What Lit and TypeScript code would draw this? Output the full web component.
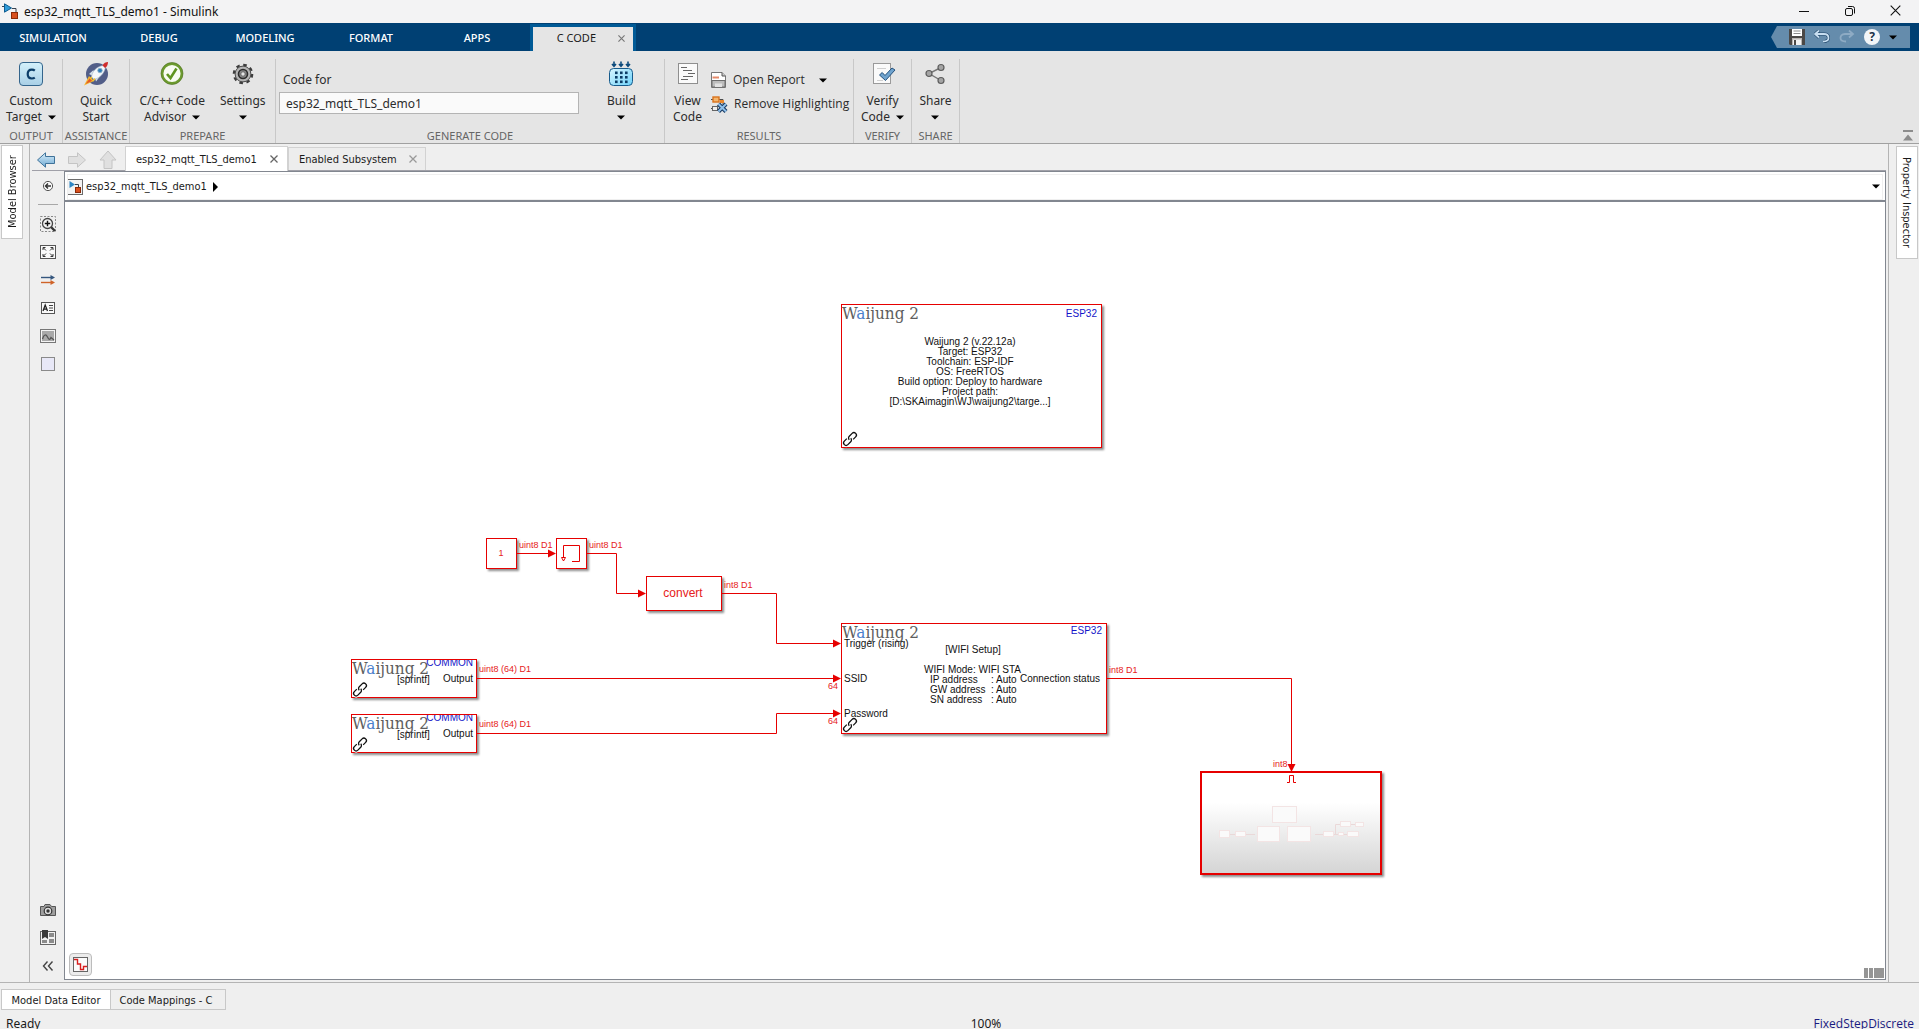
import { LitElement, html, svg, css } from "lit";
import { customElement } from "lit/decorators.js";

const UI_TABS = ["SIMULATION", "DEBUG", "MODELING", "FORMAT", "APPS"];

const caret = html`<svg class="caret" width="8" height="5" viewBox="0 0 8 5" aria-hidden="true"><path d="M0 0.5H8L4 4.5Z" fill="#000" /></svg>`;

const simulinkMark = svg`
  <path d="M0 3.5H4M10 5.5H14V9" stroke="#39424e" stroke-width="1" fill="none" />
  <path d="M2.5 0.8L9.5 5L2.5 9.2Z" fill="#2f9bd8" stroke="#0d5c91" />
  <rect x="9.5" y="9.5" width="6" height="6" fill="#d9501e" stroke="#8a2a08" />`;

const icons = {
  logo: html`<svg width="17" height="17" viewBox="0 0 17 17">${simulinkMark}</svg>`,
  target: html`<svg width="26" height="26" viewBox="0 0 26 26">
    <defs><linearGradient id="tg" x1="0" y1="0" x2="0" y2="1"><stop offset="0" stop-color="#d4f1fb" /><stop offset="1" stop-color="#a9cfe6" /></linearGradient></defs>
    <rect x="1.5" y="1.5" width="23" height="23" rx="3.5" fill="url(#tg)" stroke="#34658c" />
    <path d="M16.8 9.6C16 8.9 15 8.6 13.9 8.6C11.3 8.6 9.7 10.4 9.7 13.1C9.7 15.8 11.3 17.5 13.8 17.5C15 17.5 16 17.2 16.8 16.6" fill="none" stroke="#0b3d68" stroke-width="2.2" />
  </svg>`,
  rocket: html`<svg width="26" height="26" viewBox="0 0 26 26">
    <circle cx="14" cy="13" r="11" fill="#525e88" />
    <path d="M6 15L1 24.5L11 20Z" fill="#f5b82e" /><path d="M7 17L2.5 23L9 20Z" fill="#e2582a" />
    <path d="M6 13L10 9.5L13 10L16 13L16.5 16L13 20.5L12 16.5L10 15Z" fill="#d5e2ec" />
    <path d="M8.5 16C9 11 13 5.5 20.5 4.5L22.5 6C21.5 12 17 17 11 18.5Z" fill="#f4f8fb" stroke="#a5b5c6" stroke-width="0.6" />
    <path d="M19.5 4.5C20.5 2 23 1 25 1C25 3.5 24 6 22 7Z" fill="#cf2c2c" />
    <circle cx="17" cy="9.5" r="2.3" fill="#2f7fb9" stroke="#93b3c9" stroke-width="0.8" />
    <path d="M9 16L7 18M12 17.5L10 20" stroke="#f1c232" stroke-width="1.4" />
  </svg>`,
  advisor: html`<svg width="26" height="26" viewBox="0 0 26 26">
    <circle cx="13" cy="12.5" r="9.8" fill="#f8fcf2" stroke="#6c9a2e" stroke-width="2.4" />
    <circle cx="13" cy="12.5" r="11" fill="none" stroke="#4a6d1c" stroke-width="0.6" />
    <path d="M8 13L11.5 17L17.5 7.5" fill="none" stroke="#5f9420" stroke-width="2.6" />
  </svg>`,
  gear: html`<svg width="26" height="26" viewBox="0 0 26 26">
    <circle cx="13" cy="13" r="9.2" fill="none" stroke="#3c3c3c" stroke-width="2.2" stroke-dasharray="3.6 3.62" />
    <circle cx="13" cy="13" r="7.9" fill="#b4b4b4" stroke="#4a4a4a" stroke-width="1" />
    <circle cx="13" cy="13" r="4.5" fill="#8a8a8a" stroke="#2c2c2c" stroke-width="1.6" />
    <circle cx="13" cy="13" r="2.2" fill="#e6e6e6" stroke="#555" stroke-width="0.8" />
  </svg>`,
  build: html`<svg width="26" height="26" viewBox="0 0 26 26">
    <defs><linearGradient id="bg" x1="0" y1="0" x2="1" y2="1"><stop offset="0" stop-color="#d8f6ff" /><stop offset="1" stop-color="#6fd2fa" /></linearGradient></defs>
    <rect x="1.5" y="7.5" width="23" height="17" rx="4" fill="url(#bg)" stroke="#175b8c" />
    ${[6, 13, 20].map((x) => svg`<path d="M${x} 0.5V5M${x - 2} 3L${x} 5.2L${x + 2} 3" fill="none" stroke="#0b4a7c" stroke-width="1.6" />`)}
    ${[7, 12, 17].map((x) => [10.5, 15, 19.5].map((y) => svg`<rect x="${x}" y="${y}" width="2.6" height="2.6" fill="#0b3c66" />`))}
  </svg>`,
  viewCode: html`<svg width="26" height="26" viewBox="0 0 26 26">
    <rect x="3.5" y="2.5" width="19" height="20" fill="#fafafa" stroke="#8f8f8f" />
    <path d="M6 6.5H12M8 9.5H17M13 12.5H20M8 15.5H18M6 18.5H13" stroke="#666" />
  </svg>`,
  report: html`<svg width="16" height="16" viewBox="0 0 16 16">
    <path d="M0.5 0.5H11L14.5 4V15.5H0.5Z" fill="#fff" stroke="#777" />
    <path d="M11 0.5V4H14.5" fill="#ccc" stroke="#555" />
    <path d="M1.5 5.5H8" stroke="#e58a6a" stroke-width="2" /><path d="M1 8.5H14V15H1Z" fill="#bdbdbd" stroke="#6c6c6c" /><path d="M4 11.5H11V15H4Z" fill="#e2e2e2" />
  </svg>`,
  removeHl: html`<svg width="17" height="17" viewBox="0 0 17 17">
    <path d="M0 3.5H2M8 3.5H12V8M0 12.5H6" fill="none" stroke="#4d4d4d" />
    <rect x="2" y="1" width="6" height="5" fill="#f3b56c" stroke="#d9721c" stroke-width="1.4" /><rect x="9" y="4" width="4" height="3" fill="#e8862a" />
    <rect x="1.5" y="10.5" width="5" height="4" fill="#eee" stroke="#666" />
    <path d="M7.5 8L15 15.5M15 8L7.5 15.5" stroke="#173a63" stroke-width="4.2" /><path d="M7.5 8L15 15.5M15 8L7.5 15.5" stroke="#8fc0ea" stroke-width="2" />
  </svg>`,
  verify: html`<svg width="26" height="26" viewBox="0 0 26 26">
    <rect x="3.5" y="2.5" width="17" height="20" fill="#fafafa" stroke="#9a9a9a" />
    <path d="M7 7.5H16M7 19.5H13" stroke="#d0d0d0" />
    <path d="M9.5 14L12.2 11.5L15 14.5L22 7L25 9L15.5 19.5Z" fill="#6fa3ce" stroke="#24517d" />
  </svg>`,
  share: html`<svg width="26" height="26" viewBox="0 0 26 26">
    <path d="M19 6.5L7 12.5L19 19.5" fill="none" stroke="#777" stroke-width="1.4" />
    ${[[19, 6.5], [7, 12.5], [19, 19.5]].map(([x, y]) => svg`<circle cx="${x}" cy="${y}" r="3" fill="#a4a4a4" stroke="#5e5e5e" stroke-width="1.2" />`)}
  </svg>`,
  save: html`<svg width="16" height="16" viewBox="0 0 16 16">
    <path d="M0 0H16V16H1L0 15Z" fill="#4b4846" /><rect x="3" y="0" width="10" height="7" fill="#fff" />
    <path d="M4.5 2H11.5M4.5 4.5H11.5" stroke="#8c8c8c" /><rect x="3" y="9" width="10" height="7" fill="#b9b5b2" /><rect x="4" y="10.5" width="8" height="5.5" fill="#f2f2f2" /><rect x="5" y="11" width="2" height="5" fill="#4b4846" />
  </svg>`,
  undo: html`<svg width="16" height="14" viewBox="0 0 16 14">
    <path d="M5 0.5L1 4L5 7.5M1.5 4H10C13.5 4 14.5 6 14.5 8C14.5 10.5 12.5 11.5 9 11.5" fill="none" stroke="#1e4468" stroke-width="3" /><path d="M5 0.5L1 4L5 7.5M1.5 4H10C13.5 4 14.5 6 14.5 8C14.5 10.5 12.5 11.5 9 11.5" fill="none" stroke="#c7def1" stroke-width="1.8" />
  </svg>`,
  redo: html`<svg width="16" height="14" viewBox="0 0 16 14">
    <path d="M10 0.5L14 4L10 7.5M13.5 4H6C2.5 4 1.5 6 1.5 8C1.5 10.5 3.5 11.5 7 11.5" fill="none" stroke="#8eabc4" stroke-width="1.8" />
  </svg>`,
  back: html`<svg width="18" height="16" viewBox="0 0 18 16">
    <defs><linearGradient id="bk" x1="0" y1="0" x2="0" y2="1"><stop offset="0" stop-color="#d9eefa" /><stop offset="1" stop-color="#6ea9d3" /></linearGradient></defs>
    <path d="M0.5 8L8.5 0.8V4.5H17.5V11.5H8.5V15.2Z" fill="url(#bk)" stroke="#3f7299" />
  </svg>`,
  forward: html`<svg width="18" height="16" viewBox="0 0 18 16"><path d="M17.5 8L9.5 0.8V4.5H0.5V11.5H9.5V15.2Z" fill="#e0e0e0" stroke="#c4c4c4" /></svg>`,
  up: html`<svg width="18" height="20" viewBox="0 0 18 20"><path d="M9 1L17 10H13V18.5H5V10H1Z" fill="#e0e0e0" stroke="#c4c4c4" /></svg>`,
  modelFile: html`<svg width="16" height="16" viewBox="0 0 16 16">
    <rect x="0.5" y="0.5" width="15" height="15" fill="#f3f3f3" stroke="#6b6b6b" />
    <path d="M8 5.5H11.5V8" fill="none" stroke="#39424e" /><path d="M2.5 2L8 5.5L2.5 9Z" fill="#2f86c4" /><rect x="8.5" y="8.5" width="5" height="5" fill="#d9501e" stroke="#8a2a08" />
  </svg>`,
};

const tool = {
  hide: svg`<circle cx="8" cy="8" r="4.6" fill="#fafafa" stroke="#555" /><path d="M11 8H6M8 5.5L5.5 8L8 10.5" fill="none" stroke="#333" stroke-width="1.4" />`,
  zoom: svg`<rect x="0.5" y="0.5" width="15" height="15" fill="none" stroke="#888" stroke-dasharray="2 1.5" /><path d="M11 11L15 15" stroke="#333" stroke-width="2.4" /><circle cx="7.5" cy="7.5" r="5" fill="#f4f4f4" stroke="#444" stroke-width="1.3" /><path d="M4.8 7.5H10.2M7.5 4.8V10.2" stroke="#111" stroke-width="1.4" />`,
  fit: svg`<rect x="0.5" y="1.5" width="15" height="13" fill="#fafafa" stroke="#555" /><path d="M3 6V3.5H5.5M3.5 4L6 6.5M13 6V3.5H10.5M12.5 4L10 6.5M3 10V12.5H5.5M3.5 12L6 9.5M13 10V12.5H10.5M12.5 12L10 9.5" fill="none" stroke="#333" />`,
  signals: svg`<path d="M1 5.5H12" stroke="#35567e" stroke-width="1.4" /><path d="M10.5 3L15 5.5L10.5 8Z" fill="#35567e" /><path d="M1 10.5H12" stroke="#cf6328" stroke-width="1.4" /><path d="M10.5 8L15 10.5L10.5 13Z" fill="#cf6328" />`,
  note: svg`<rect x="1.5" y="2.5" width="13" height="11" fill="#fafafa" stroke="#555" /><path d="M3 11L5.2 5L7.5 11M3.8 9.2H6.8" fill="none" stroke="#222" stroke-width="1.3" /><path d="M9 5.5H13M9 8H13M9 10.5H13" stroke="#444" />`,
  image: svg`<rect x="0.5" y="1.5" width="15" height="13" fill="#f4f4f4" stroke="#777" /><rect x="2" y="3" width="12" height="10" fill="#a9a9a9" /><path d="M2.5 11C4 6 6 6 7.5 9S10 12 11 9.5L14 12" fill="none" stroke="#555" stroke-width="1.3" />`,
  area: svg`<rect x="1.5" y="1.5" width="13" height="13" fill="#e8e8f7" stroke="#8a8a8a" />`,
  camera: svg`<path d="M0.5 4.5H4L5 2.5H10L11.5 4.5H15.5V13.5H0.5Z" fill="#9f9f9f" stroke="#555" /><circle cx="8" cy="9" r="3.8" fill="#ddd" stroke="#333" stroke-width="1.2" /><circle cx="8" cy="9" r="1.7" fill="#333" />`,
  browser: svg`<rect x="0.5" y="1.5" width="15" height="13" fill="#f2f2f2" stroke="#666" /><path d="M2 0H8V9L5 7L2 9Z" fill="#3a3a3a" /><rect x="9" y="3" width="5" height="4" fill="#8c8c8c" /><rect x="9" y="9" width="5" height="4" fill="#8c8c8c" /><rect x="2" y="10" width="5" height="3" fill="#8c8c8c" />`,
  collapse: svg`<path d="M7.500 3.500L3.500 8L7.500 12.500M12.500 3.500L8.500 8L12.500 12.500" fill="none" stroke="#444" stroke-width="1.4" />`,
};

const TOOLS_TOP: [string, unknown][] = [
  ["Zoom", tool.zoom],
  ["Fit to View", tool.fit],
  ["Sample Time", tool.signals],
  ["Annotation", tool.note],
  ["Image", tool.image],
  ["Area", tool.area],
];
const TOOLS_BOTTOM: [string, unknown][] = [
  ["Screenshot", tool.camera],
  ["Library Browser", tool.browser],
  ["Hide toolbar", tool.collapse],
];

/* Diagram drawing helpers; coordinates are canvas units. */
const arrowRight = (x: number, y: number) => svg`<path class="tip" d="M${x} ${y}L${x - 8} ${y - 4}V${y + 4}Z" />`;
const link = (x: number, y: number) => svg`
  <g transform="translate(${x} ${y}) rotate(-45)" fill="none">
    <rect x="-8" y="-2.5" width="9" height="5" rx="2.5" stroke="#fff" stroke-width="3" />
    <rect x="-1" y="-2.5" width="9" height="5" rx="2.5" stroke="#fff" stroke-width="3" />
    <path d="M-2 -2.500H-5.500A2.500 2.500 0 0 0 -5.500 2.500H-1.500A2.500 2.500 0 0 0 1 0" stroke="#111" stroke-width="1.3" />
    <path d="M2 2.500H5.500A2.500 2.500 0 0 0 5.500 -2.500H1.500A2.500 2.500 0 0 0 -1 0" stroke="#111" stroke-width="1.3" />
  </g>`;
const brand = (x: number, y: number) => svg`<text class="brand" x="${x}" y="${y}">W<tspan class="accent">a</tspan>ijung 2</text>`;
const box = (x: number, y: number, w: number, h: number) => svg`<rect class="box" x="${x}" y="${y}" width="${w}" height="${h}" />`;

const sprintfBlock = (y: number) => svg`
  ${box(286.5, y, 125, 38)}
  <svg x="287" y="${y + 0.5}" width="124" height="37">
    <text class="blue end" x="121" y="6">COMMON</text>
    <text class="brand" x="0" y="14">W<tspan class="accent">a</tspan>ijung 2</text>
    <text class="t" x="45" y="23">[sprintf]</text>
    <text class="t end" x="121" y="22">Output</text>
  </svg>
  ${link(295, y + 30)}
  <text class="sig" x="414" y="${y + 12.5}">uint8 (64) D1</text>`;

const INFO = ["Waijung 2 (v.22.12a)", "Target: ESP32", "Toolchain: ESP-IDF", "OS: FreeRTOS", "Build option: Deploy to hardware", "Project path:", "[D:\\SKAimagin\\WJ\\waijung2\\targe...]"];

@customElement("model-canvas")
export class ModelCanvas extends LitElement {
  static styles = css`
    :host { display: block; position: relative; min-height: 0; overflow: hidden; background: #fff; }
    .diagram { display: block; width: 100%; height: 100%; font-family: "Liberation Sans", Arial, sans-serif; }
    .box { fill: #fff; stroke: #e60000; stroke-width: 1; filter: drop-shadow(2px 2px 1px rgba(0, 0, 0, 0.45)); }
    .sub { stroke-width: 2; fill: url(#fade); }
    .wire { fill: none; stroke: #e60000; stroke-width: 1; }
    .tip { fill: #e60000; }
    .t { font-size: 10px; fill: #111; }
    .blue { font-size: 10px; fill: #1414c8; }
    .sig { font-size: 9px; fill: #e62020; }
    .big { font-size: 12px; fill: #e62020; }
    .mid { text-anchor: middle; }
    .end { text-anchor: end; }
    .brand { font-family: "DejaVu Serif Condensed", "DejaVu Serif", serif; font-size: 17px; fill: #5e5e5e; }
    .accent { fill: #4a80cc; }
    .mini { fill: #fafafa; stroke: #f3e4e4; }
    .mini-wire { fill: none; stroke: #ead8d8; }
    .badge { position: absolute; left: 4px; bottom: 3px; width: 23px; height: 23px; padding: 0; display: grid; place-items: center; background: #ececec; border: 1px solid #bcbcbc; border-radius: 4px; }
    .bars { position: absolute; right: 1px; bottom: 1px; display: flex; gap: 1px; }
    .bar { width: 4px; height: 10px; background: #959595; }
    .wide { width: 10px; }
  `;

  render() {
    return html`
      <svg class="diagram" role="img" aria-label="Block diagram">
        <defs><linearGradient id="fade" x1="0" y1="0" x2="0" y2="1"><stop offset="0.3" stop-color="#fff" /><stop offset="1" stop-color="#d4d4d4" /></linearGradient></defs>

        ${box(776.5, 102.5, 260, 143)}
        ${brand(777, 117)}
        <text class="blue end" x="1032" y="115">ESP32</text>
        ${INFO.map((line, i) => svg`<text class="t mid" x="905" y="${143 + i * 10}">${line}</text>`)}
        ${link(785, 237)}

        ${box(421.5, 336.5, 30, 30)}
        <text class="sig mid" x="436" y="354">1</text>
        <path class="wire" d="M452 351.5H484" />${arrowRight(491, 351.5)}
        <text class="sig" x="454" y="346">uint8 D1</text>
        ${box(491.5, 336.5, 30, 30)}
        <path class="wire" d="M507 359.5H514.5V343.5H498.5V356M496.5 355.5H500.5L498.5 359Z" />
        <text class="sig" x="524" y="346">uint8 D1</text>
        <path class="wire" d="M522 351.5H551.5V391.5H574" />${arrowRight(581, 391.5)}
        ${box(581.5, 374.5, 75, 34)}
        <text class="big mid" x="618" y="395">convert</text>
        <text class="sig" x="659" y="386">int8 D1</text>
        <path class="wire" d="M657 391.5H711.5V441.5H768" />${arrowRight(776, 441.5)}

        ${sprintfBlock(457.5)}
        ${sprintfBlock(512.5)}
        <path class="wire" d="M412 476.5H768" />${arrowRight(776, 476.5)}
        <path class="wire" d="M412 531.5H711.5V511.5H768" />${arrowRight(776, 511.5)}
        <text class="sig" x="763" y="487">64</text>
        <text class="sig" x="763" y="522">64</text>

        ${box(776.5, 421.5, 265, 110)}
        ${brand(777, 436)}
        <text class="blue end" x="1037" y="432">ESP32</text>
        <text class="t" x="779" y="445">Trigger (rising)</text>
        <text class="t" x="779" y="480">SSID</text>
        <text class="t" x="779" y="515">Password</text>
        <text class="t mid" x="908" y="451">[WIFI Setup]</text>
        <text class="t" x="859" y="471">WIFI Mode: WIFI STA</text>
        ${["IP", "GW", "SN"].map((n, i) => svg`
          <text class="t" x="865" y="${481 + i * 10}">${n} address</text>
          <text class="t" x="926" y="${481 + i * 10}">: Auto</text>`)}
        <text class="t end" x="1035" y="480">Connection status</text>
        ${link(785, 523)}

        <text class="sig" x="1044" y="471">int8 D1</text>
        <path class="wire" d="M1042 476.5H1226.5V563" />
        <text class="sig" x="1208" y="565">int8</text>
        <rect class="box sub" x="1136" y="570" width="180" height="102" />
        <path class="tip" d="M1226.5 570L1222.5 562H1230.5Z" />
        <path class="wire" d="M1222 580.5H1224.5V573.5H1228.5V580.5H1231" />
        <path class="mini-wire" d="M1154 632.5H1190M1250 632.5H1290M1270.5 632V622.5H1295" />
        <rect class="mini" x="1207.5" y="604.5" width="24" height="16" />
        <rect class="mini" x="1192.5" y="624.5" width="22" height="15" />
        <rect class="mini" x="1222.5" y="624.5" width="23" height="15" />
        <rect class="mini" x="1154.5" y="628.5" width="10" height="7" />
        <rect class="mini" x="1170.5" y="629.5" width="10" height="5" />
        <rect class="mini" x="1258.5" y="629.5" width="10" height="5" />
        <rect class="mini" x="1273.5" y="630.5" width="5" height="3" />
        <rect class="mini" x="1282.5" y="629.5" width="11" height="5" />
        <rect class="mini" x="1275.5" y="619.5" width="10" height="5" />
        <rect class="mini" x="1290.5" y="620.5" width="8" height="4" />
      </svg>
      <button class="badge" aria-label="Code perspective">
        <svg width="15" height="15" viewBox="0 0 15 15"><rect x="0.5" y="0.5" width="14" height="14" fill="#fbfbfb" stroke="#666" /><path d="M1 2.5H4.5V7H7.5V12.5H10.5V9.5H14" fill="none" stroke="#d81e1e" stroke-width="1.4" /></svg>
      </button>
      <div class="bars"><div class="bar"></div><div class="bar"></div><div class="bar wide"></div></div>
    `;
  }
}

@customElement("app-root")
export class AppRoot extends LitElement {
  static styles = css`
    :host { display: block; font-family: "Noto Sans", "Open Sans", sans-serif; font-size: 12px; line-height: 16px; color: #1a1a1a; }
    * { box-sizing: border-box; }
    svg { display: block; flex: none; }
    button { font: inherit; color: inherit; background: none; border: 0; padding: 0; margin: 0; }
    .app { display: flex; flex-direction: column; min-height: 100vh; background: #efefef; }

    .titlebar { display: flex; align-items: center; height: 23px; padding: 0 18px 0 2px; background: #f3f3f4; color: #111; }
    .title { flex: 1; margin: 0 5px; font-size: 12px; font-weight: 400; }
    .window { display: flex; gap: 34px; align-items: center; padding-bottom: 2px; }

    .tabs { display: flex; height: 28px; background: #004073; }
    .tab { width: 106px; padding-top: 2px; color: #fff; font-size: 11px; font-weight: 500; }
    .tab-current { display: flex; width: 106px; margin-top: 1px; padding: 3px 3px 0; background: #005a96; }
    .tab-face { display: flex; flex: 1; align-items: center; justify-content: flex-end; gap: 22px; padding: 0 8px 2px 0; background: #e5e5e5; font-size: 11px; }
    .quick { display: flex; align-items: center; gap: 9px; height: 22px; margin: 3px 9px 0 auto; padding: 0 13px 0 18px; background: #658cac; clip-path: polygon(6px 0, 100% 0, 100% 100%, 6px 100%, 0 50%); }
    .help { display: grid; place-items: center; width: 16px; height: 16px; border-radius: 50%; background: #f2f5f8; color: #1c3349; font-weight: 700; font-size: 12px; }

    .ribbon { display: flex; height: 93px; padding-top: 8px; background: #e5e5e5; border-bottom: 1px solid #a0a0a0; color: #2c2c2c; }
    .group { display: flex; flex-direction: column; border-right: 1px solid #c8c8c8; }
    .group-body { display: flex; flex: 1; justify-content: center; padding-top: 2px; }
    .group-name { font-size: 11px; text-align: center; color: #666; line-height: 14px; white-space: nowrap; }
    .w-output { width: 63px; } .w-assist { width: 67px; } .w-prepare { width: 146px; } .w-generate { width: 389px; }
    .w-results { width: 189px; } .w-verify { width: 58px; } .w-share { width: 48px; }
    .cmd { display: flex; flex-direction: column; align-items: center; gap: 6px; white-space: nowrap; }
    .cmd-label { display: flex; flex-direction: column; align-items: center; }
    .cmd-line { display: flex; align-items: center; gap: 6px; height: 16px; }
    .prepare { gap: 15px; }
    .generate { justify-content: flex-start; padding-left: 3px; }
    .field { display: flex; flex-direction: column; gap: 4px; width: 300px; margin: 11px 28px 0 0; }
    .field label { padding-left: 4px; }
    .field input { height: 22px; width: 100%; padding: 0 6px; font: inherit; color: inherit; background: #fafafa; border: 1px solid #b4b4b4; border-radius: 0; }
    .results { justify-content: flex-start; gap: 9px; padding-left: 8px; }
    .rows { display: flex; flex-direction: column; gap: 8px; padding-top: 11px; font-family: "Open Sans", sans-serif; }
    .row { display: flex; align-items: center; gap: 6px; height: 16px; white-space: nowrap; }
    .row .caret { margin-left: 8px; }
    .collapse { margin: auto 5px 1px auto; }

    .work { display: flex; flex: 1; min-height: 0; border-bottom: 1px solid #b4b4b4; font-family: "DejaVu Sans Condensed", "DejaVu Sans", sans-serif; font-size: 11px; }
    .side-left { width: 30px; padding: 1px 0 0 1px; border-right: 1px solid #b4b4b4; }
    .side-right { width: 31px; padding: 2px 0 0 7px; border-left: 1px solid #b4b4b4; }
    .side-tab { display: flex; align-items: center; justify-content: center; width: 22px; height: 94px; writing-mode: vertical-rl; background: #fff; border: 1px solid #c8c8c8; }
    .side-left .side-tab { padding-right: 2px; }
    .side-right .side-tab { padding-right: 2px; }
    .flip { transform: rotate(180deg); }
    .tall { height: 113px; }
    .editor { display: flex; flex: 1; flex-direction: column; min-width: 0; padding: 0 2px 2px 2px; }
    .docs { display: flex; align-items: flex-end; height: 27px; border-bottom: 1px solid #a0a0a8; }
    .nav { display: flex; align-self: center; align-items: center; gap: 13px; margin: 5px 8px 0 5px; }
    .doc { display: flex; align-items: center; justify-content: space-between; height: 23px; width: 138px; padding: 2px 8px 0 10px; border: 1px solid #d2d2d2; border-bottom: 0; background: #ededed; }
    .doc-current { height: 25px; width: 163px; padding: 2px 9px 0 10px; background: #fff; margin-bottom: -1px; }
    .x { padding-bottom: 2px; }
    .body { display: flex; flex: 1; min-height: 0; }
    .tools { display: flex; flex-direction: column; width: 32px; padding: 1px 0 0; }
    .tool { display: grid; place-items: center; height: 28px; }
    .rule { height: 1px; margin: 4px 6px 5px; background: #a8a8a8; }
    .push { margin-top: auto; }
    .pane { display: flex; flex: 1; flex-direction: column; min-width: 0; border: 1px solid #828790; }
    .path { display: flex; align-items: center; gap: 3px; height: 30px; padding: 1px 5px 0 2px; background: #fff; border-bottom: 2px solid #828790; outline: 1px solid #efefef; outline-offset: -3px; }
    .path .caret { margin-left: auto; }
    .arrow { margin-left: 3px; }
    model-canvas { flex: 1; }

    .dock { display: flex; padding: 6px 0 0 1px; font-family: "DejaVu Sans Condensed", "DejaVu Sans", sans-serif; font-size: 11px; }
    .dock-tab { height: 21px; width: 116px; padding: 2px 4px 0 0; border: 1px solid #c8c8c8; }
    .dock-current { width: 109px; padding-right: 0; background: #fff; border-right: 0; }
    .status { display: grid; grid-template-columns: 1fr auto 1fr; align-items: center; height: 19px; padding: 6px 5px 0 6px; }
    .zoomed { padding-left: 52px; }
    .solver { text-align: right; color: #1a1a80; text-decoration: none; font-family: "Open Sans", sans-serif; }
  `;

  private closeMark(color: string, size = 8, weight = 1.3) {
    return html`<svg width="${size}" height="${size}" viewBox="0 0 8 8" aria-hidden="true"><path d="M0.5 0.5L7.5 7.5M7.5 0.5L0.5 7.5" stroke="${color}" stroke-width="${weight}" /></svg>`;
  }

  private command(icon: unknown, first: string, second = "", drop = false) {
    return html`<button class="cmd">${icon}
      <span class="cmd-label"><span class="cmd-line">${first}</span><span class="cmd-line">${second}${drop ? caret : ""}</span></span>
    </button>`;
  }

  private toolButton([name, art]: [string, unknown]) {
    return html`<button class="tool" aria-label="${name}"><svg width="16" height="16" viewBox="0 0 16 16">${art}</svg></button>`;
  }

  render() {
    return html`
      <div class="app">
        <header class="titlebar">
          ${icons.logo}
          <h1 class="title">esp32_mqtt_TLS_demo1 - Simulink</h1>
          <div class="window">
            <button aria-label="Minimize"><svg width="12" height="12" viewBox="0 0 12 12"><path d="M1 6.5H11" stroke="#111" /></svg></button>
            <button aria-label="Restore"><svg width="12" height="12" viewBox="0 0 12 12"><rect x="1.5" y="3.5" width="7" height="7" rx="1.5" fill="none" stroke="#111" /><path d="M4 1.5H8.5Q10.5 1.5 10.5 3.5V8.5" fill="none" stroke="#111" /></svg></button>
            <button aria-label="Close">${this.closeMark("#111", 11, 0.8)}</button>
          </div>
        </header>

        <nav class="tabs">
          ${UI_TABS.map((t) => html`<button class="tab">${t}</button>`)}
          <div class="tab-current"><div class="tab-face"><button>C CODE</button><button aria-label="Close tab">${this.closeMark("#777", 7)}</button></div></div>
          <div class="quick">
            <button aria-label="Save">${icons.save}</button>
            <button aria-label="Undo">${icons.undo}</button>
            <button aria-label="Redo">${icons.redo}</button>
            <button class="help">?</button>
            <button aria-label="More">${caret}</button>
          </div>
        </nav>

        <section class="ribbon">
          <div class="group w-output"><div class="group-body">${this.command(icons.target, "Custom", "Target", true)}</div><div class="group-name">OUTPUT</div></div>
          <div class="group w-assist"><div class="group-body">${this.command(icons.rocket, "Quick", "Start")}</div><div class="group-name">ASSISTANCE</div></div>
          <div class="group w-prepare"><div class="group-body prepare">${this.command(icons.advisor, "C/C++ Code", "Advisor", true)}${this.command(icons.gear, "Settings", "", true)}</div><div class="group-name">PREPARE</div></div>
          <div class="group w-generate">
            <div class="group-body generate">
              <div class="field"><label for="code-for">Code for</label><input id="code-for" type="text" .value=${"esp32_mqtt_TLS_demo1"} /></div>
              ${this.command(icons.build, "Build", "", true)}
            </div>
            <div class="group-name">GENERATE CODE</div>
          </div>
          <div class="group w-results">
            <div class="group-body results">
              ${this.command(icons.viewCode, "View", "Code")}
              <div class="rows">
                <button class="row">${icons.report}Open Report${caret}</button>
                <button class="row">${icons.removeHl}Remove Highlighting</button>
              </div>
            </div>
            <div class="group-name">RESULTS</div>
          </div>
          <div class="group w-verify"><div class="group-body">${this.command(icons.verify, "Verify", "Code", true)}</div><div class="group-name">VERIFY</div></div>
          <div class="group w-share"><div class="group-body">${this.command(icons.share, "Share", "", true)}</div><div class="group-name">SHARE</div></div>
          <button class="collapse" aria-label="Collapse ribbon"><svg width="12" height="12" viewBox="0 0 12 12"><path d="M1 0H11V2H1ZM6 4.5L11 10.5H1Z" fill="#8c8c8c" /></svg></button>
        </section>

        <main class="work">
          <aside class="side-left"><button class="side-tab flip">Model Browser</button></aside>
          <section class="editor">
            <div class="docs">
              <div class="nav">
                <button aria-label="Back">${icons.back}</button>
                <button aria-label="Forward">${icons.forward}</button>
                <button aria-label="Up">${icons.up}</button>
              </div>
              <div class="doc doc-current"><button>esp32_mqtt_TLS_demo1</button><button class="x" aria-label="Close">${this.closeMark("#666")}</button></div>
              <div class="doc"><button>Enabled Subsystem</button><button class="x" aria-label="Close">${this.closeMark("#999")}</button></div>
            </div>
            <div class="body">
              <div class="tools">
                ${this.toolButton(["Hide browser", tool.hide])}
                <div class="rule"></div>
                ${TOOLS_TOP.map((t) => this.toolButton(t))}
                <div class="push"></div>
                ${TOOLS_BOTTOM.map((t) => this.toolButton(t))}
              </div>
              <div class="pane">
                <div class="path">
                  ${icons.modelFile}
                  <button>esp32_mqtt_TLS_demo1</button>
                  <svg class="arrow" width="5" height="10" viewBox="0 0 5 10"><path d="M0 0L5 5L0 10Z" fill="#000" /></svg>
                  ${caret}
                </div>
                <model-canvas></model-canvas>
              </div>
            </div>
          </section>
          <aside class="side-right"><button class="side-tab tall">Property Inspector</button></aside>
        </main>

        <div class="dock"><button class="dock-tab dock-current">Model Data Editor</button><button class="dock-tab">Code Mappings - C</button></div>
        <footer class="status"><span>Ready</span><span class="zoomed">100%</span><a class="solver" href="#">FixedStepDiscrete</a></footer>
      </div>
    `;
  }
}
